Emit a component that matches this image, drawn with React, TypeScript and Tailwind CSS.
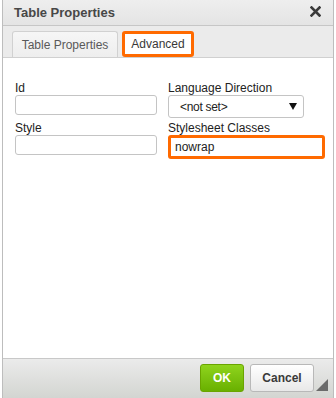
import React from "react";

export default function App() {
  const font = { fontFamily: '"Liberation Sans", Arial, sans-serif' };
  return (
    <div className="w-[336px] h-[398px] bg-white overflow-hidden" style={font}>
      <div className="ml-[2px] w-[332px] h-[398px] border-l border-r border-[#bdbdbd] flex flex-col">
        {/* Title bar */}
        <div className="h-[26px] shrink-0 flex items-center justify-between pl-[11px] pr-[12px] bg-gradient-to-b from-[#eeeeee] to-[#e4e4e4] border-b border-[#c6c6c6]">
          <span className="text-[13px] font-bold text-[#474747] leading-none mt-[-1px]">Table Properties</span>
          <svg width="11" height="11" viewBox="0 0 11 11" className="mt-[-2px]">
            <path d="M1.5 1.5 L9.5 9.5 M9.5 1.5 L1.5 9.5" stroke="#3a3a3a" strokeWidth="2.6" strokeLinecap="square" />
          </svg>
        </div>
        {/* Tabs */}
        <div className="h-[32px] shrink-0 bg-[#ebebeb] flex items-end pl-[9px] gap-[4px] border-b border-[#d0d0d0]">
          <div className="h-[26px] w-[106px] flex items-center justify-center border border-b-0 border-[#d1d1d1] rounded-t-[3px] bg-gradient-to-b from-[#f6f6f6] to-[#eeeeee] text-[12px] text-[#595959]">
            Table Properties
          </div>
          <div className="h-[26px] w-[72px] flex items-center justify-center border-[3px] border-[#ff6a00] rounded-[3px] bg-white text-[12px] text-[#383838]">
            Advanced
          </div>
        </div>
        {/* Body */}
        <div className="flex-1 bg-white flex gap-[11px] pl-[12px] pt-[23px]">
          <div className="w-[142px] flex flex-col">
            <div className="h-[14px] text-[12px] leading-[14px] text-[#222]">Id</div>
            <div className="h-[20px] border border-[#c4c4c4] rounded-[3px] bg-white"></div>
            <div className="h-[14px] mt-[6px] text-[12px] leading-[14px] text-[#222]">Style</div>
            <div className="h-[20px] border border-[#c4c4c4] rounded-[3px] bg-white"></div>
          </div>
          <div className="w-[157px] flex flex-col">
            <div className="h-[14px] text-[12px] leading-[14px] text-[#222]">Language Direction</div>
            <div className="h-[23px] w-[136px] border border-[#c4c4c4] rounded-[3px] bg-white flex items-center justify-between pl-[11px] pr-[6px]">
              <span className="text-[12px] text-[#222] tracking-[-0.3px]">&lt;not set&gt;</span>
              <svg width="8" height="7" viewBox="0 0 8 7">
                <path d="M0 0 L8 0 L4 7 Z" fill="#111" />
              </svg>
            </div>
            <div className="h-[14px] mt-[3px] text-[12px] leading-[14px] text-[#222]">Stylesheet Classes</div>
            <div className="h-[24px] w-[157px] border-[3px] border-[#ff6a00] rounded-[3px] bg-white flex items-center pl-[4px]">
              <span className="text-[12px] text-[#222]">nowrap</span>
            </div>
          </div>
        </div>
        {/* Footer */}
        <div className="h-[40px] shrink-0 border-t border-[#c8c8c8] bg-gradient-to-b from-[#ebebeb] to-[#d3d5d1] flex items-start justify-end pt-[5px] pr-[3px] relative">
          <div className="h-[28px] w-[44px] rounded-[3px] border border-[#6aa400] bg-gradient-to-b from-[#8fd41c] to-[#69b000] flex items-center justify-center text-[12px] font-bold text-white">
            OK
          </div>
          <div className="h-[28px] w-[64px] ml-[6px] rounded-[3px] border border-[#b8b8b8] bg-gradient-to-b from-[#ffffff] to-[#e8e8e8] flex items-center justify-center text-[12px] font-bold text-[#3a3a3a]">
            Cancel
          </div>
          <div className="w-[16px] h-[28px] flex items-end justify-end pb-[1px] pr-[2px]">
            <svg width="12" height="12" viewBox="0 0 12 12">
              <path d="M12 0 L12 12 L0 12 Z" fill="#6b6b6b" />
            </svg>
          </div>
        </div>
      </div>
    </div>
  );
}
